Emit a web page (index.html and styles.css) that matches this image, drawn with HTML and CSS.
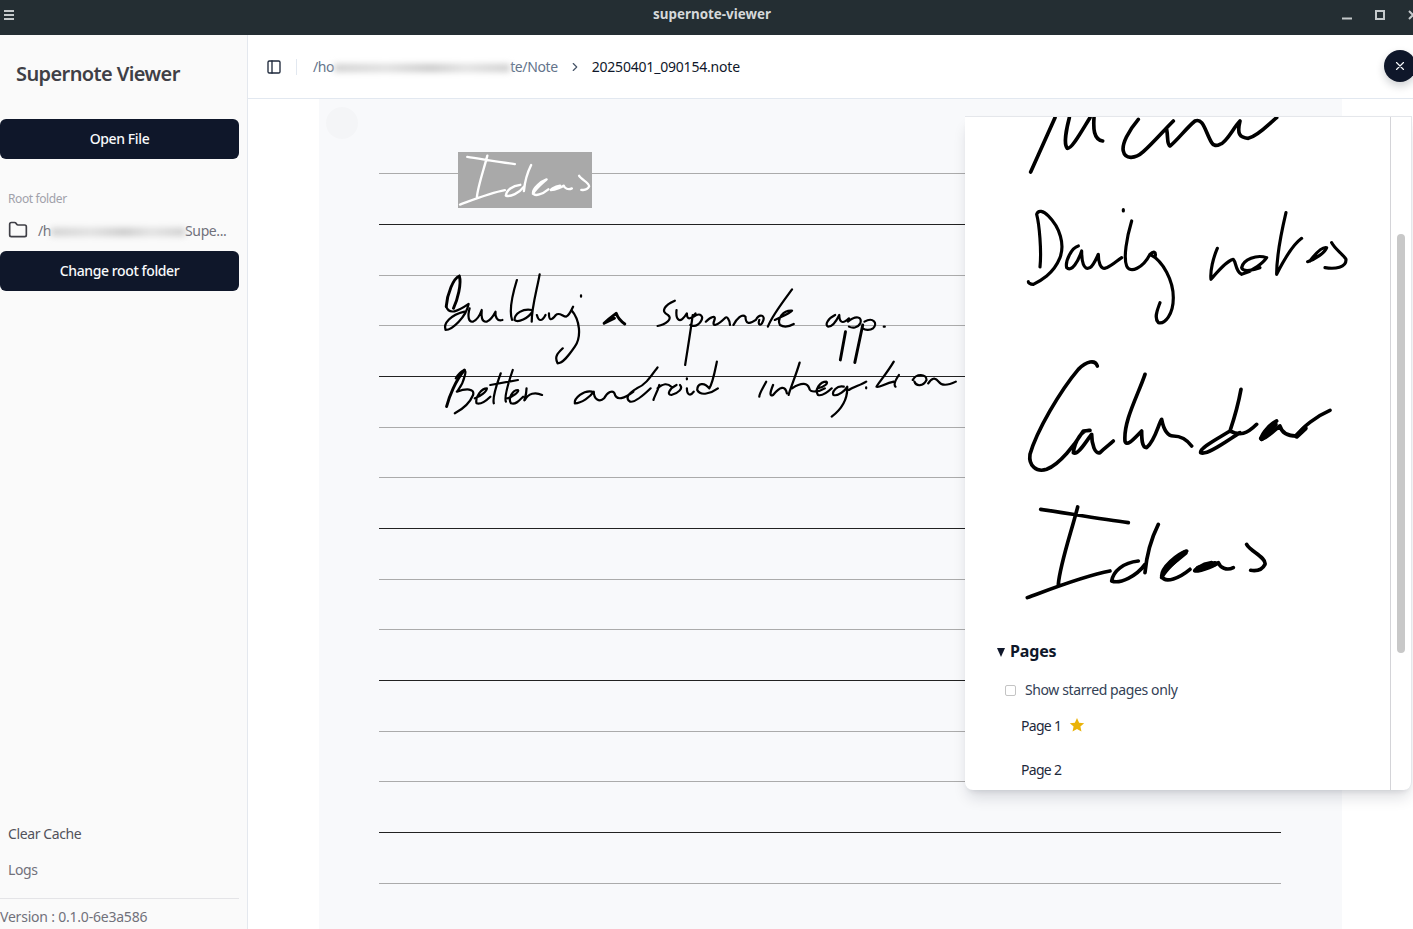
FILE: index.html
```html
<!DOCTYPE html>
<html lang="en">

<head>
    <meta charset="UTF-8">
    <meta name="viewport" content="width=device-width, initial-scale=1.0">
    <title>supernote-viewer</title>
    <link rel="stylesheet" href="styles.css">
</head>

<body>
    <header class="titlebar">
        <svg class="tb-icon" width="12" height="12" viewBox="0 0 12 12"><path d="M1 2h10M1 6h10M1 10h10" /></svg>
        <span class="tb-title">supernote-viewer</span>
        <div class="tb-controls">
            <svg class="tb-icon" width="12" height="12" viewBox="0 0 12 12"><path d="M1 9.500h10" /></svg>
            <svg class="tb-icon" width="12" height="12" viewBox="0 0 12 12"><path d="M2 2h8v8H2z" /></svg>
            <svg class="tb-icon" width="12" height="12" viewBox="0 0 12 12"><path d="M2 2l8 8M10 2l-8 8" /></svg>
        </div>
    </header>

    <div class="app">
        <aside class="sidebar">
            <h1 class="brand">Supernote Viewer</h1>
            <button class="btn btn-open">Open File</button>

            <div class="root-label">Root folder</div>
            <div class="root-row">
                <svg class="folder" width="20" height="20" viewBox="0 0 24 24"><path d="M20 20a2 2 0 0 0 2-2V8a2 2 0 0 0-2-2h-7.900a2 2 0 0 1-1.690-.9L9.600 3.900A2 2 0 0 0 7.930 3H4a2 2 0 0 0-2 2v13a2 2 0 0 0 2 2Z" /></svg>
                <span class="root-path">/h<span class="redact redact-root"></span>Supe...</span>
            </div>
            <button class="btn">Change root folder</button>

            <div class="side-bottom">
                <a class="side-link">Clear Cache</a>
                <a class="side-link">Logs</a>
                <div class="version">Version : 0.1.0-6e3a586</div>
            </div>
        </aside>

        <main class="content">
            <div class="topbar">
                <svg class="toggle" width="16" height="16" viewBox="0 0 24 24"><rect x="3" y="3" width="18" height="18" rx="2" /><path d="M9 3v18" /></svg>
                <span class="topbar-sep"></span>
                <span class="crumb">/ho<span class="redact redact-crumb"></span>te/Note</span>
                <svg class="chevron" width="14" height="14" viewBox="0 0 24 24"><path d="m9 18 6-6-6-6" /></svg>
                <span class="crumb-file">20250401_090154.note</span>
                <button class="close-btn">
                    <svg width="14" height="14" viewBox="0 0 24 24"><path d="M18 6 6 18M6 6l12 12" /></svg>
                </button>
            </div>

            <div class="viewer">
                <div class="sheet">
                    <span class="page-badge"></span>
                    <svg class="sheet-art" width="1023" height="830" viewBox="319 99 1023 830">
                        <g class="rules">
                            <path class="rule-light" d="M379 173.5H1281M379 275.5H1281M379 325.5H1281M379 427.5H1281M379 477.5H1281M379 579.5H1281M379 629.5H1281M379 731.5H1281M379 781.5H1281M379 883.5H1281" />
                            <path class="rule-dark" d="M379 224.5H1281M379 376.5H1281M379 528.5H1281M379 680.5H1281M379 832.5H1281" />
                        </g>
                        <rect x="458" y="152" width="134" height="56" fill="#a9a9a9" />
                        <g class="ink-white" transform="translate(450.6 66) scale(.181 .18)">
                            <path d="M92 505C160 515 280 535 355 545M203 498C185 570 150 670 145 730M52 770C120 745 220 705 300 690M445 550C425 590 410 640 405 695M385 660C340 665 310 690 305 720C330 730 380 705 405 670M455 710C470 680 520 640 530 630C500 640 455 680 455 705C465 730 510 710 540 685M605 665C570 670 550 690 555 690C580 690 620 670 625 665C630 680 650 690 670 680M710 610C720 630 770 650 765 670C755 690 735 690 722 688" />
                        </g>
                        <g class="ink-note" transform="translate(430 140) scale(.3448 .3333)">
                            <!-- linha 1 -->
                            <path d="M47 500C55 525 80 515 112 492C105 530 65 570 45 570C38 550 60 525 100 515" />
                            <path class="heavy" d="M85 408C68 415 50 460 47 500M85 408C92 430 80 480 68 505" />
                            <path d="M115 505C108 530 112 548 125 545C135 540 145 525 150 510C148 530 150 548 165 545C175 540 185 525 190 515C188 530 195 545 210 540" />
                            <path d="M252 420C240 460 228 510 238 540M318 403C310 450 295 500 295 545M295 510C270 505 245 520 245 540C255 550 285 535 297 515M310 525C315 545 325 545 335 525M345 520C345 540 350 545 365 525C375 515 385 530 395 530C405 525 410 510 415 500M410 510C435 540 440 590 420 620C400 650 385 670 370 670C360 650 370 640 385 625M438 466V470" />
                            <path class="heavy" d="M505 550C525 530 535 525 540 520C545 535 555 545 565 552M505 550L535 535" />
                            <path d="M710 482C680 495 668 515 690 525C705 535 685 555 660 558M715 510C712 540 725 555 745 520C745 540 755 540 770 520M762 525C755 580 745 640 740 675M765 530C785 515 795 530 785 545C775 560 765 560 755 555M800 545C815 530 830 525 825 540C815 565 835 555 855 535C860 525 870 540 870 555M880 555C890 535 905 520 915 530C915 550 925 555 945 540C955 520 975 525 965 545C960 560 950 555 955 540M1050 448C1020 490 990 530 980 560M1000 540C1020 530 1045 520 1050 512C1025 510 1005 535 1015 555C1030 565 1045 558 1055 552" />
                            <path d="M1175 525C1155 535 1143 555 1155 560C1170 560 1180 540 1187 525C1187 545 1195 555 1215 535M1212 545C1235 525 1255 530 1248 550C1240 565 1225 565 1215 560M1260 545C1285 530 1300 550 1285 565C1275 572 1262 570 1255 565M1316 560H1319" />
                            <path class="heavy" d="M1205 575L1190 660M1255 555L1232 668" />
                            <!-- linha 2 -->
                            <path class="heavy" d="M100 690C75 720 55 770 48 800" />
                            <path d="M75 715C90 690 110 680 100 710C95 735 85 745 78 755C105 745 130 745 125 765C115 790 90 810 72 820M130 775C145 770 165 755 165 745C150 745 130 770 135 790C150 795 165 780 175 770M205 700C195 730 180 770 185 790M240 690C230 720 215 770 220 785M175 735L255 720M225 775C240 770 260 755 255 750C240 750 225 775 235 790C250 795 260 780 270 770M280 745C280 770 270 785 275 780C285 760 305 755 325 765" />
                            <path d="M470 755C445 750 418 775 420 790C440 790 465 770 475 755C475 775 490 790 505 775C515 755 530 750 535 760C540 785 565 775 590 755M660 682C640 710 625 735 600 745C575 760 565 775 580 785C595 790 625 760 640 745M665 735C660 755 650 770 648 780M660 745C675 730 690 730 700 740M715 735C695 745 685 765 700 765C720 760 735 745 725 735M745 745C745 765 755 770 765 755M745 715V718M832 665C825 700 820 730 810 745C795 725 775 730 775 750C785 770 815 760 835 745" />
                            <path d="M975 725C965 745 955 760 955 770M995 735C985 760 985 770 995 765C1015 740 1030 735 1035 760M1072 668C1060 710 1045 745 1040 765M1050 745C1080 725 1095 730 1100 745C1100 760 1130 755 1145 745M1125 745C1145 740 1155 730 1150 725C1130 725 1115 750 1125 765C1140 770 1155 755 1165 745M1200 740C1180 735 1165 755 1170 765C1185 770 1205 750 1210 740C1212 780 1190 810 1165 830M1215 750C1230 740 1250 735 1265 725M1265 742V745M1345 665C1325 700 1300 730 1295 740C1300 745 1320 730 1345 725M1360 705C1350 720 1345 735 1350 740M1400 720C1410 700 1440 700 1440 720C1430 740 1410 740 1405 725M1445 730C1455 715 1465 710 1475 725C1485 740 1505 735 1525 725" />
                        </g>
                    </svg>
                </div>

                <section class="panel">
                    <div class="panel-scroll">
                        <svg class="panel-art" width="425" height="523" viewBox="965 116 425 523">
                            <g class="ink-panel" transform="translate(1010 110) scale(.3333)">
                                <path d="M62 183L135 20M178 20C170 50 160 100 172 112C185 115 215 60 240 20M252 20C250 50 250 85 278 90M385 25C355 60 335 100 340 120C345 145 375 145 400 122C430 95 460 60 490 30M470 55C475 80 470 100 480 105C500 90 530 50 555 30C580 20 585 60 605 95C610 105 620 105 630 100C650 95 670 50 690 30C680 70 690 80 715 82C745 75 775 40 800 20" />
                                <path class="fine" d="M90 468C95 420 88 340 80 310C85 295 100 300 115 315C150 350 165 400 150 440C130 490 90 510 70 520C60 520 55 515 55 512M205 405C185 410 165 450 170 470C185 485 205 450 215 420C215 450 220 480 240 470C250 465 260 440 265 430C265 450 270 480 290 470C305 465 320 450 335 440M340 296V300M365 330C350 380 340 440 350 465C360 490 400 470 420 430C430 420 440 420 435 440M420 430C460 450 490 510 490 560C490 610 465 640 445 635C430 620 445 590 450 575" />
                                <path class="fine" d="M622 412C610 440 600 480 603 505C625 480 650 450 670 445C680 455 675 480 695 490C730 480 760 455 770 440C740 430 700 445 695 470C700 485 735 475 750 470M828 305C815 360 800 440 800 490C820 450 850 400 875 382M893 452C915 445 945 425 950 410C935 405 915 430 900 450M945 470C975 475 1010 470 1008 445C1000 430 975 415 965 395" />
                            </g>
                            <g class="ink-panel" transform="translate(1010 340) scale(.3333)">
                                <path d="M262 75C255 55 230 60 205 85C150 150 80 270 60 340C55 375 80 395 110 385C150 370 195 310 220 270L240 268C215 265 195 300 190 335C205 345 235 290 245 280C245 310 255 340 270 335C285 320 300 310 310 300" />
                                <path d="M405 100C385 160 340 240 345 300C350 320 375 290 395 270C395 290 395 320 410 320C435 300 445 250 455 235C460 260 470 285 490 285C510 285 530 295 545 315M693 145C685 190 670 240 660 270C620 295 570 320 572 335C590 345 650 300 690 275M660 270C690 285 710 280 740 250M800 240C770 255 750 290 755 295C780 285 800 260 810 255C815 275 830 285 860 285C875 260 920 225 960 208" />
                                <path class="thick" d="M755 292L795 250M860 285L885 262" />
                                <path d="M92 505C160 515 280 535 355 545M203 498C185 570 150 670 145 730M52 770C120 745 220 705 300 690M445 550C425 590 410 640 405 695M385 660C340 665 310 690 305 720C330 730 380 705 405 670M455 710C470 680 520 640 530 630C500 640 455 680 455 705C465 730 510 710 540 685M605 665C570 670 550 690 555 690C580 690 620 670 625 665C630 680 650 690 670 680M710 610C720 630 770 650 765 670C755 690 735 690 722 688" />
                                <path class="thick" d="M470 680L525 635M565 682L615 668" />
                            </g>
                        </svg>

                        <details class="pages" open>
                            <summary>Pages</summary>
                            <label class="starred">
                                <span class="checkbox"></span>
                                Show starred pages only
                            </label>
                            <div class="page-item">
                                Page 1
                                <svg class="star" width="16" height="16" viewBox="0 0 24 24"><path d="M12 1.500l3.200 7 7.600.8-5.700 5.100 1.600 7.500L12 18.100l-6.700 3.800 1.600-7.500L1.200 9.300l7.600-.8z" /></svg>
                            </div>
                            <div class="page-item">Page 2</div>
                        </details>
                    </div>
                    <div class="panel-track">
                        <span class="panel-thumb"></span>
                    </div>
                </section>
            </div>
        </main>
    </div>
</body>

</html>
```

FILE: styles.css
```css
* {
    box-sizing: border-box;
}

body {
    margin: 0;
    height: 100vh;
    overflow: hidden;
    display: flex;
    flex-direction: column;
    font-family: "Noto Sans", sans-serif;
    font-size: 14px;
    letter-spacing: -0.028em;
    background: #fff;
    color: #0f172a;
}

/* barra da janela */
.titlebar {
    height: 35px;
    flex: none;
    display: flex;
    align-items: center;
    justify-content: space-between;
    padding-left: 3px;
    background: #242e33;
    position: relative;
}

.tb-title {
    position: absolute;
    left: 11px;
    right: 0;
    top: 5px;
    text-align: center;
    font-size: 13.4px;
    line-height: 18px;
    font-weight: 700;
    letter-spacing: 0;
    color: #d5d8da;
}

.tb-icon {
    fill: none;
    stroke: #c4c9cb;
    stroke-width: 2;
}

.tb-controls {
    display: flex;
    gap: 21px;
    margin-right: -6px;
    margin-top: -6px;
}

.tb-controls .tb-icon {
    display: block;
}

.titlebar > .tb-icon {
    margin-top: -6px;
}

.app {
    flex: 1;
    display: flex;
    min-height: 0;
}

/* sidebar */
.sidebar {
    width: 248px;
    flex: none;
    display: flex;
    flex-direction: column;
    padding-right: 8px;
    background: #fafafa;
    border-right: 1px solid #e4e8ee;
}

.brand {
    margin: 25px 0 32px 16px;
    font-size: 20px;
    line-height: 27px;
    font-weight: 600;
    letter-spacing: -0.03em;
    color: #3f3f46;
}

.btn {
    display: block;
    width: 100%;
    height: 40px;
    flex: none;
    padding: 0 0 2px;
    border: none;
    border-radius: 6px;
    background: #0f172a;
    color: #f8fafc;
    font-family: inherit;
    font-size: 14px;
    font-weight: 500;
    letter-spacing: inherit;
}

.root-label {
    margin: 32px 0 0 8px;
    font-size: 12px;
    line-height: 16px;
    color: #a1a1aa;
}

.root-row {
    display: flex;
    align-items: center;
    gap: 10px;
    height: 36px;
    margin-top: 5px;
    padding-left: 8px;
    margin-bottom: 3px;
}

.folder {
    flex: none;
    fill: none;
    stroke: #3f3f46;
    stroke-width: 2;
    stroke-linecap: round;
    stroke-linejoin: round;
}

.root-path {
    color: #71717a;
    white-space: nowrap;
}

.redact {
    display: inline-block;
    height: 8px;
    background: linear-gradient(90deg, #cfcfcf, #dedede 30%, #c8c8c8 55%, #e0e0e0 75%, #cdcdcd);
    filter: blur(3px);
}

.redact-root {
    width: 134px;
}

.redact-crumb {
    width: 176px;
}

.side-bottom {
    margin-top: auto;
    display: flex;
    flex-direction: column;
}

.side-link {
    padding-left: 8px;
    height: 36px;
    line-height: 36px;
    color: #52525b;
}

.side-link + .side-link {
    color: #71717a;
}

.version {
    height: 31px;
    margin-top: 10px;
    border-top: 1px solid #e4e4e7;
    line-height: 36px;
    letter-spacing: -0.015em;
    color: #71717a;
}

/* area principal */
.content {
    flex: 1;
    min-width: 0;
    display: flex;
    flex-direction: column;
}

.topbar {
    height: 64px;
    flex: none;
    display: flex;
    align-items: center;
    padding-left: 18px;
    border-bottom: 1px solid #e2e8f0;
    position: relative;
}

.toggle {
    fill: none;
    stroke: #1e293b;
    stroke-width: 2;
    stroke-linecap: round;
    stroke-linejoin: round;
}

.topbar-sep {
    width: 1px;
    height: 16px;
    margin: 0 16px 0 14px;
    background: #e2e8f0;
}

.crumb {
    color: #64748b;
    white-space: nowrap;
}

.chevron {
    margin: 0 10px;
    fill: none;
    stroke: #475569;
    stroke-width: 2;
    stroke-linecap: round;
    stroke-linejoin: round;
}

.crumb-file {
    letter-spacing: -0.014em;
    color: #0f172a;
}

.close-btn {
    position: absolute;
    left: 1136px;
    top: 15px;
    width: 32px;
    height: 32px;
    padding: 0;
    border: none;
    border-radius: 50%;
    display: flex;
    align-items: center;
    justify-content: center;
    background: #0f172a;
    box-shadow: 0 4px 8px rgba(15, 23, 42, 0.2);
}

.close-btn svg {
    fill: none;
    stroke: #f8fafc;
    stroke-width: 2;
    stroke-linecap: round;
}

.viewer {
    flex: 1;
    min-height: 0;
    position: relative;
    overflow: hidden;
    padding-left: 71px;
}

.sheet {
    width: 1023px;
    height: 830px;
    background: #f8f9fb;
    position: relative;
}

.sheet-art {
    display: block;
}

.page-badge {
    position: absolute;
    left: 7px;
    top: 8px;
    width: 32px;
    height: 32px;
    border-radius: 50%;
    background: #f4f5f7;
}

.rule-light {
    stroke: #ababab;
    fill: none;
}

.rule-dark {
    stroke: #222;
    fill: none;
}

.ink-note path,
.ink-white path,
.ink-panel path {
    fill: none;
    stroke-linecap: round;
    stroke-linejoin: round;
}

.ink-note path {
    stroke: #000;
    stroke-width: 6.500;
}

.ink-note path.heavy {
    stroke-width: 8.500;
}

.ink-white path {
    stroke: #fff;
    stroke-width: 13;
}

.ink-panel path {
    stroke: #000;
    stroke-width: 11;
}

.ink-panel path.fine {
    stroke-width: 9.500;
}

.ink-panel path.thick {
    stroke-width: 16;
}

/* painel flutuante */
.panel {
    position: absolute;
    left: 717px;
    top: 17px;
    width: 447px;
    height: 674px;
    display: flex;
    overflow: hidden;
    background: #fff;
    border-top: 1px solid #e5e7eb;
    border-right: 1px solid #e5e7eb;
    border-radius: 0 0 8px 8px;
    box-shadow: 0 10px 15px -3px rgba(15, 23, 42, 0.14), 0 4px 6px -4px rgba(15, 23, 42, 0.14);
}

.panel-scroll {
    width: 426px;
    flex: none;
    border-right: 1px solid #d4d4d8;
}

.panel-art {
    display: block;
}

.pages {
    padding-left: 32px;
}

.pages summary {
    display: flex;
    align-items: center;
    gap: 5px;
    font-size: 16px;
    line-height: 22px;
    font-weight: 700;
    letter-spacing: -0.01em;
    color: #0f172a;
}

.pages summary::before {
    content: "";
    width: 0;
    height: 0;
    margin-top: 2px;
    border-left: 4px solid transparent;
    border-right: 4px solid transparent;
    border-top: 9px solid #0f172a;
}

.starred {
    display: flex;
    align-items: center;
    gap: 9px;
    margin: 18px 0 0 8px;
    line-height: 20px;
    color: #334155;
}

.checkbox {
    width: 11px;
    height: 11px;
    border: 1px solid #c4c4c4;
    border-radius: 2px;
    background: #fff;
}

.page-item {
    display: flex;
    align-items: center;
    gap: 8px;
    height: 44px;
    padding-left: 24px;
    letter-spacing: -0.05em;
    color: #1e293b;
}

.starred + .page-item {
    margin-top: 3px;
}

.star {
    fill: #eab308;
}

.panel-track {
    flex: 1;
    padding-left: 6px;
    padding-top: 117px;
}

.panel-thumb {
    display: block;
    width: 8px;
    height: 419px;
    border-radius: 4px;
    background: #c8c8c8;
}
```
